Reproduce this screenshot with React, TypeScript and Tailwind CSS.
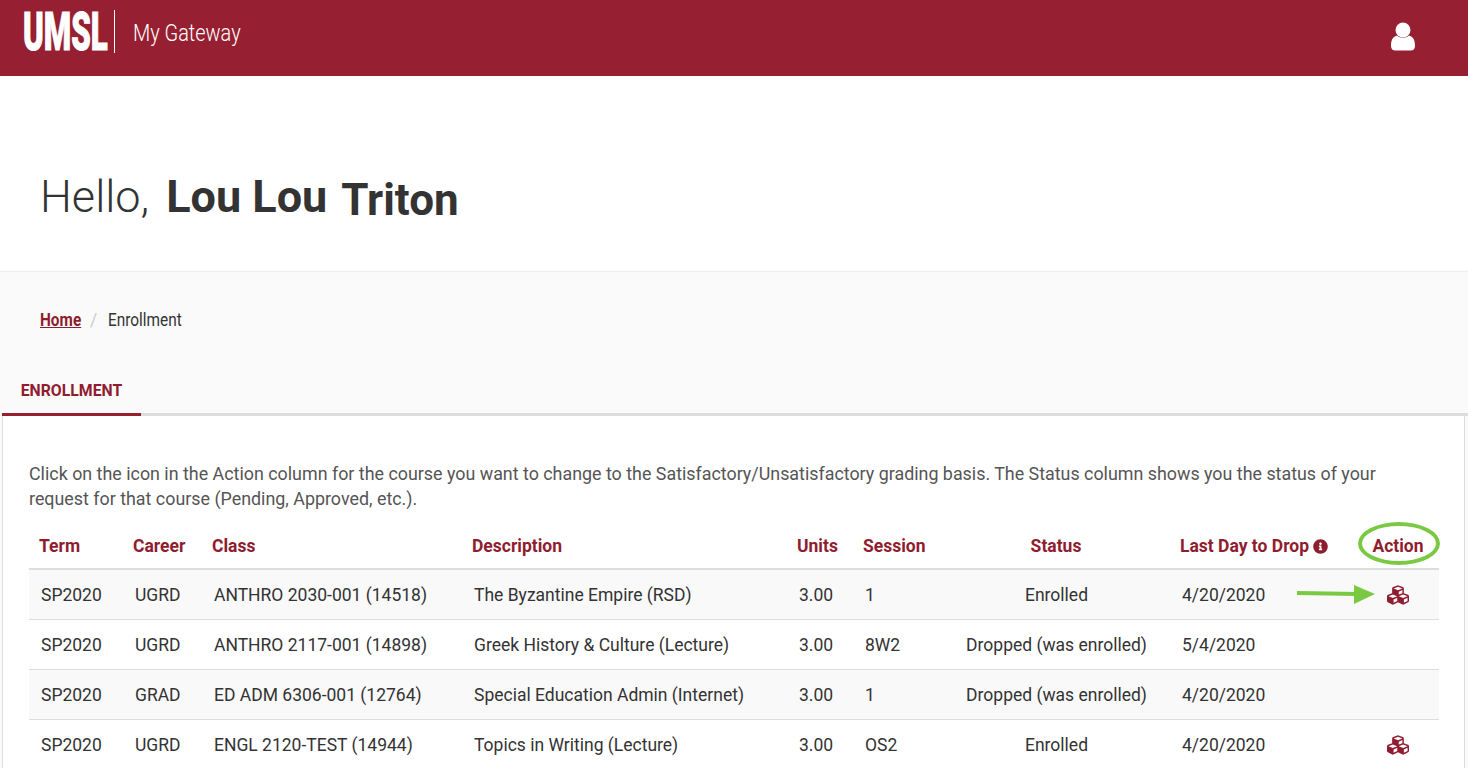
import React from "react";
import { FaCubes, FaInfoCircle } from "react-icons/fa";

type Course = {
  term: string;
  career: string;
  cls: string;
  description: string;
  units: string;
  session: string;
  status: string;
  drop: string;
  action?: boolean;
};

const courses: Course[] = [
  { term: "SP2020", career: "UGRD", cls: "ANTHRO 2030-001 (14518)", description: "The Byzantine Empire (RSD)", units: "3.00", session: "1", status: "Enrolled", drop: "4/20/2020", action: true },
  { term: "SP2020", career: "UGRD", cls: "ANTHRO 2117-001 (14898)", description: "Greek History & Culture (Lecture)", units: "3.00", session: "8W2", status: "Dropped (was enrolled)", drop: "5/4/2020" },
  { term: "SP2020", career: "GRAD", cls: "ED ADM 6306-001 (12764)", description: "Special Education Admin (Internet)", units: "3.00", session: "1", status: "Dropped (was enrolled)", drop: "4/20/2020" },
  { term: "SP2020", career: "UGRD", cls: "ENGL 2120-TEST (14944)", description: "Topics in Writing (Lecture)", units: "3.00", session: "OS2", status: "Enrolled", drop: "4/20/2020", action: true },
];

const thClass = "h-[49px] border-b-2 border-[#dddddd] pt-[3px] pl-[10px] text-left align-middle font-bold whitespace-nowrap text-[#8f1d2f]";
const thCenter = "h-[49px] border-b-2 border-[#dddddd] pt-[3px] text-center align-middle font-bold text-[#8f1d2f]";
const tdClass = "h-[50px] border-b border-[#dddddd] pt-[2px] pl-[12px] align-middle whitespace-nowrap";

export default function App() {
  return (
    <div className="h-[768px] overflow-hidden bg-[#fafafa] font-['Roboto',sans-serif] text-[#333333]">
      {/* Top bar */}
      <header className="flex h-[76px] items-center justify-between bg-[#971f32] pl-[23px] pr-[53px] text-white">
        <div className="flex items-center pb-[14px]">
          <div className="w-[84px]">
            <span className="block origin-left scale-x-[0.58] text-[54px] leading-[43px] font-black whitespace-nowrap [-webkit-text-stroke:1px_white]">
              UMSL
            </span>
          </div>
          <div className="ml-[7px] h-[43px] w-px bg-white" />
          <span className="relative top-[2px] ml-[18px] origin-left scale-x-[0.83] text-[24px] font-light whitespace-nowrap">My Gateway</span>
        </div>
        <svg className="mb-[5px] h-[30px] w-[24px] fill-white" viewBox="0 0 24 30">
          <circle cx="12" cy="9" r="7.5" />
          <path d="M0 25 C0 17 3 15.5 6 14.5 C9 17.5 15 17.5 18 14.5 C21 15.5 24 17 24 25 C24 28 22 29.5 20 29.5 L4 29.5 C2 29.5 0 28 0 25 Z" />
        </svg>
      </header>

      {/* Greeting */}
      <section className="flex h-[196px] items-center border-b border-[#eeeeee] bg-white pt-[46px] pl-[40px]">
        <h1 className="flex items-baseline text-[45px] font-light text-[#333333]">
          Hello,
          <span className="ml-[17px] font-bold">Lou Lou</span>
          <span className="relative top-[3px] ml-[14px] text-[44px] font-bold">Triton</span>
        </h1>
      </section>

      {/* Breadcrumb */}
      <nav className="flex h-[96px] items-center pl-[40px] text-[17.5px]">
        <a className="w-[50px] origin-left scale-x-[0.88] font-bold whitespace-nowrap text-[#8f1d2f] underline">Home</a>
        <span className="text-[#cccccc]">/</span>
        <span className="ml-[11px] origin-left scale-x-[0.88]">Enrollment</span>
      </nav>

      {/* Tab */}
      <div className="ml-[2px] flex h-[48px] border-b-[3px] border-[#dddddd]">
        <div className="-mb-[3px] flex w-[139px] items-center justify-center border-b-[3px] border-[#971f32] pt-[4px] pb-[3px] text-[15.8px] font-bold text-[#8f1d2f]">
          ENROLLMENT
        </div>
      </div>

      {/* Panel */}
      <main className="mr-[3px] ml-[2px] h-[400px] border-x border-[#dddddd] bg-white pt-[45px] pr-[25px] pl-[26px]">
        <p className="text-[17.88px] leading-[25px] whitespace-nowrap text-[#555555]">
          Click on the icon in the Action column for the course you want to change to the Satisfactory/Unsatisfactory grading basis. The Status column shows you the status of your
          <br />
          request for that course (Pending, Approved, etc.).
        </p>
        <div className="relative mt-[10px]">
          <table className="w-[1410px] table-fixed border-separate border-spacing-0 text-[17.5px] text-[#333333]">
            <colgroup>
              <col className="w-[94px]" />
              <col className="w-[79px]" />
              <col className="w-[260px]" />
              <col className="w-[325px]" />
              <col className="w-[66px]" />
              <col className="w-[89px]" />
              <col className="w-[228px]" />
              <col className="w-[187px]" />
              <col className="w-[82px]" />
            </colgroup>
            <thead>
              <tr>
                <th className={thClass}>Term</th>
                <th className={thClass}>Career</th>
                <th className={thClass}>Class</th>
                <th className={thClass}>Description</th>
                <th className={thClass}>Units</th>
                <th className={thClass}>Session</th>
                <th className={thCenter}>Status</th>
                <th className={thClass}>
                  Last Day to Drop <FaInfoCircle className="mb-[2px] inline h-[15px] w-[15px]" />
                </th>
                <th className={thCenter}>Action</th>
              </tr>
            </thead>
            <tbody>
              {courses.map((c, i) => (
                <tr key={c.cls} className={i % 2 === 0 ? "bg-[#f9f9f9]" : "bg-white"}>
                  <td className={tdClass}>{c.term}</td>
                  <td className={tdClass}>{c.career}</td>
                  <td className={tdClass}>{c.cls}</td>
                  <td className={tdClass}>{c.description}</td>
                  <td className={tdClass}>{c.units}</td>
                  <td className={tdClass}>{c.session}</td>
                  <td className="h-[50px] border-b border-[#dddddd] pt-[2px] pl-[1px] text-center align-middle whitespace-nowrap">{c.status}</td>
                  <td className={tdClass}>{c.drop}</td>
                  <td className="h-[50px] border-b border-[#dddddd] align-middle">
                    {c.action && <FaCubes className="mx-auto h-[22px] w-[24px] text-[#8f1d2f]" />}
                  </td>
                </tr>
              ))}
            </tbody>
          </table>

          {/* Green annotations */}
          <div className="absolute top-[1px] left-[1329px] h-[43px] w-[82px] rounded-[50%] border-[4px] border-[#7ac943]" />
          <svg className="absolute top-[63px] left-[1268px] h-[22px] w-[80px]" viewBox="0 0 80 22">
            <path d="M0 9 L60 10" stroke="#7ac943" strokeWidth="4" fill="none" />
            <path d="M57 1 L78 10 L57 20 Z" fill="#7ac943" />
          </svg>
        </div>
      </main>
    </div>
  );
}
